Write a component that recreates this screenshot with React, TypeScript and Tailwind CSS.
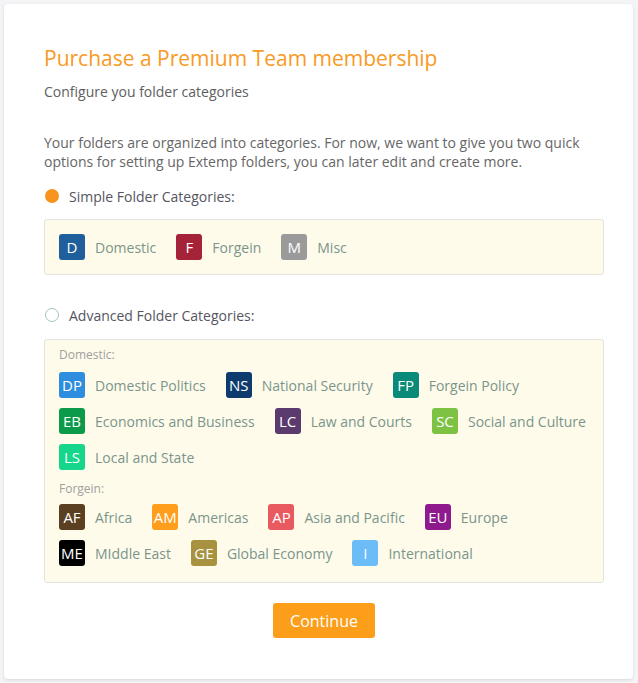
import React from "react";

type Item = { code: string; label: string; color: string };

const Badge = ({ item }: { item: Item }) => (
  <div className="flex items-center">
    <div
      className="flex h-[26px] w-[26px] items-center justify-center rounded-[3px] text-[15px] leading-none text-white"
      style={{ backgroundColor: item.color }}
    >
      {item.code}
    </div>
    <span className="ml-[10px] text-[14px] text-[#7b958c]">{item.label}</span>
  </div>
);

const Row = ({ items, className = "" }: { items: Item[]; className?: string }) => (
  <div className={`flex items-center gap-x-5 ${className}`}>
    {items.map((i) => (
      <Badge key={i.code} item={i} />
    ))}
  </div>
);

export default function App() {
  const simple: Item[] = [
    { code: "D", label: "Domestic", color: "#1f5f9c" },
    { code: "F", label: "Forgein", color: "#a52338" },
    { code: "M", label: "Misc", color: "#9a9a9a" },
  ];
  const d1: Item[] = [
    { code: "DP", label: "Domestic Politics", color: "#2e8ddf" },
    { code: "NS", label: "National Security", color: "#0d3b6e" },
    { code: "FP", label: "Forgein Policy", color: "#0a8a78" },
  ];
  const d2: Item[] = [
    { code: "EB", label: "Economics and Business", color: "#0a9a4a" },
    { code: "LC", label: "Law and Courts", color: "#5b3a6e" },
    { code: "SC", label: "Social and Culture", color: "#7dc242" },
  ];
  const d3: Item[] = [{ code: "LS", label: "Local and State", color: "#15d68a" }];
  const f1: Item[] = [
    { code: "AF", label: "Africa", color: "#5a4020" },
    { code: "AM", label: "Americas", color: "#ff9d1c" },
    { code: "AP", label: "Asia and Pacific", color: "#e85a5f" },
    { code: "EU", label: "Europe", color: "#8e1a8e" },
  ];
  const f2: Item[] = [
    { code: "ME", label: "MIddle East", color: "#000000" },
    { code: "GE", label: "Global Economy", color: "#a89240" },
    { code: "I", label: "International", color: "#6cbcf8" },
  ];

  return (
    <div
      className="min-h-[683px] w-[638px] bg-[#f4f4f6] pl-[4px] pt-[4px]"
      style={{ fontFamily: '"Open Sans", "Liberation Sans", sans-serif' }}
    >
      <div className="w-[629px] rounded-[4px] bg-white px-[40px] pb-[41px] pt-[39px] shadow-[0_1px_3px_rgba(0,0,0,0.12)]">
        <div className="w-[560px]">
          <h1 className="text-[21px] leading-[30px] text-[#f89a24]">
            Purchase a Premium Team membership
          </h1>
          <p className="mt-[9px] text-[14px] leading-[20px] text-[#606060]">
            Configure you folder categories
          </p>
          <p className="mt-[31px] text-[14px] leading-[19px] text-[#666666]">
            Your folders are organized into categories. For now, we want to give you two quick
            options for setting up Extemp folders, you can later edit and create more.
          </p>

          <div className="mt-[15px] flex h-[20px] items-center">
            <span className="ml-[1px] h-[14px] w-[14px] rounded-full bg-[#f7941d]" />
            <span className="ml-[10px] text-[14px] text-[#555560]">Simple Folder Categories:</span>
          </div>
          <div className="mt-[13px] rounded-[3px] border border-[#e3e3dc] bg-[#fefbea] px-[14px] py-[14px]">
            <Row items={simple} />
          </div>

          <div className="mt-[30px] flex h-[20px] items-center">
            <span className="ml-[1px] h-[14px] w-[14px] rounded-full border border-[#a3c4b9] bg-white" />
            <span className="ml-[10px] text-[14px] text-[#555560]">Advanced Folder Categories:</span>
          </div>
          <div className="mt-[14px] rounded-[3px] border border-[#e3e3dc] bg-[#fefbea] px-[14px] pb-[16px] pt-[7px]">
            <div className="text-[12px] leading-[16px] text-[#a0a0a0]">Domestic:</div>
            <Row items={d1} className="mt-[9px]" />
            <Row items={d2} className="mt-[10px]" />
            <Row items={d3} className="mt-[10px]" />
            <div className="mt-[11px] text-[12px] leading-[16px] text-[#a0a0a0]">Forgein:</div>
            <Row items={f1} className="mt-[7px]" />
            <Row items={f2} className="mt-[10px]" />
          </div>

          <div className="mt-[20px] flex justify-center">
            <button className="h-[35px] w-[102px] rounded-[3px] bg-[#fc9e1a] text-[16px] text-white">
              Continue
            </button>
          </div>
        </div>
      </div>
    </div>
  );
}
